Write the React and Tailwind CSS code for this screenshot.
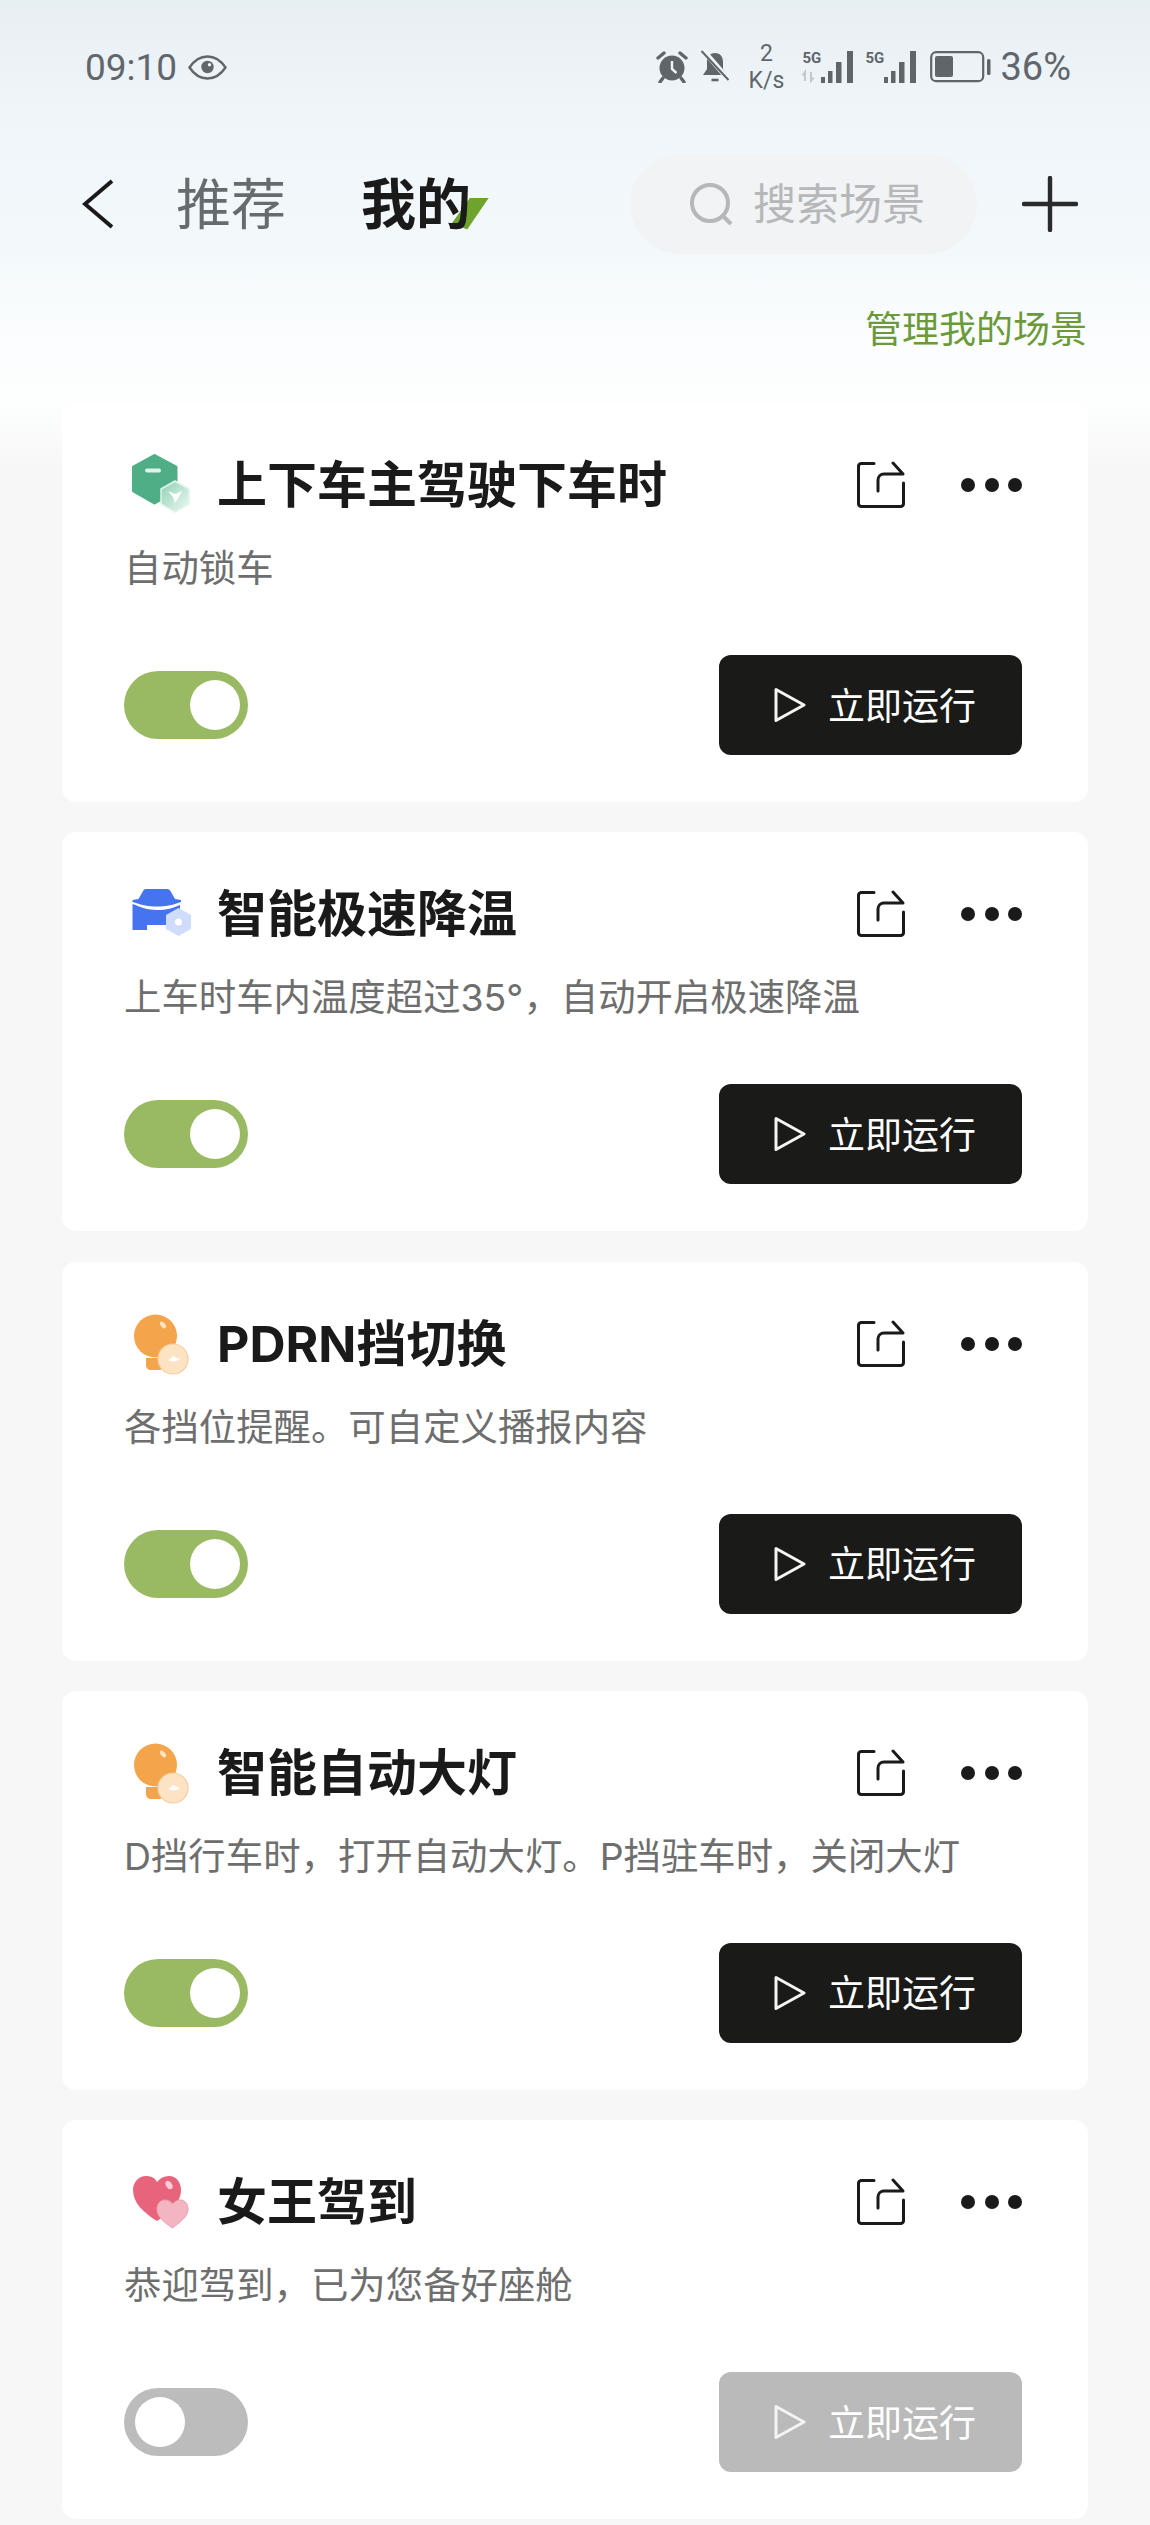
const cjk = "font-['Inter','Noto_Sans_CJK_SC',sans-serif]";

const scenes = [
  { title: "上下车主驾驶下车时", desc: "自动锁车", icon: "hex", on: true },
  { title: "智能极速降温", desc: "上车时车内温度超过35°，自动开启极速降温", icon: "car", on: true },
  { title: "PDRN挡切换", desc: "各挡位提醒。可自定义播报内容", icon: "bulb", on: true },
  { title: "智能自动大灯", desc: "D挡行车时，打开自动大灯。P挡驻车时，关闭大灯", icon: "bulb", on: true },
  { title: "女王驾到", desc: "恭迎驾到，已为您备好座舱", icon: "heart", on: false },
];

// --- Status bar icons ---
const Eye = () => (
  <svg width="39" height="25" viewBox="0 0 39 25" fill="none">
    <path d="M1.500 12.500C6.500 5 12.500 1.500 19.500 1.500s13 3.500 18 11c-5 7.500-11 11-18 11s-13-3.500-18-11Z" stroke="#60666b" strokeWidth="2.400" />
    <circle cx="19.500" cy="12" r="6.200" fill="#60666b" />
    <circle cx="21.500" cy="9.800" r="1.700" fill="#eef4f8" />
  </svg>
);

const Alarm = () => (
  <svg width="32" height="32" viewBox="0 0 32 32" fill="none">
    <circle cx="16" cy="17" r="12.500" fill="#5f6569" />
    <path d="M16 10v8l4.500 4" stroke="#f1f5f8" strokeWidth="2.400" />
    <path d="M2 7l6-5M30 7l-6-5M7 27l-3 4M25 27l3 4" stroke="#5f6569" strokeWidth="3.400" strokeLinecap="round" />
  </svg>
);

const BellOff = () => (
  <svg width="30" height="34" viewBox="0 0 30 34" fill="none">
    <path d="M15 3c-5.500 0-8 4-8 9v7l-4 6h24l-4-6v-7c0-5-2.500-9-8-9Z" fill="#5f6569" />
    <path d="M11.500 30h7" stroke="#5f6569" strokeWidth="2.600" />
    <path d="M3 0l26 30" stroke="#f1f5f8" strokeWidth="5" />
    <path d="M1.500 1l27 29" stroke="#5f6569" strokeWidth="2" />
  </svg>
);

const Signal = ({ arrows }) => (
  <div className="relative h-[32px] w-[52px]">
    <span className="absolute top-[-3px] left-0 font-['Roboto',sans-serif] text-[15px] leading-[20px] font-bold text-[#5f6569]">5G</span>
    <svg className="absolute inset-0" width="52" height="32" viewBox="0 0 52 32">
      {arrows && <path d="M3 30v-9l-2.500 3.500M9 21v9l2.500-3.500" stroke="#c4c8cb" strokeWidth="2" fill="none" />}
      <rect x="19" y="26" width="4" height="6" fill="#5f6569" />
      <rect x="26" y="20" width="4.500" height="12" fill="#5f6569" />
      <rect x="34" y="11" width="5.500" height="21" fill="#5f6569" />
      <rect x="45" y="0" width="6" height="32" fill="#5f6569" />
    </svg>
  </div>
);

const Battery = () => (
  <svg width="61" height="32" viewBox="0 0 61 32" fill="none">
    <rect x="1.200" y="1.200" width="52" height="29" rx="5" stroke="#5f6569" strokeWidth="2.200" />
    <rect x="5" y="5" width="18" height="21" rx="2" fill="#5f6569" />
    <rect x="57" y="8" width="3.500" height="16" rx="1.500" fill="#5f6569" />
  </svg>
);

// --- Scene icons ---
const SceneIcon = ({ kind }) => {
  if (kind === "hex")
    return (
      <svg width="62" height="62" viewBox="0 0 62 62">
        <defs>
          <linearGradient id="hexGlass" x1="0" y1="0" x2="1" y2="1">
            <stop offset="0" stopColor="#8fd0b3" />
            <stop offset="1" stopColor="#eef9f4" />
          </linearGradient>
        </defs>
        <path d="M24.500 1.500 46 13v24L24.500 49 3.500 37V13Z" fill="#4fae85" stroke="#4fae85" strokeWidth="3" strokeLinejoin="round" />
        <rect x="15" y="14.500" width="16" height="4" rx="2" fill="#dff3ea" />
        <path d="M45 27 59 35v15l-14 8-14-8V35Z" fill="url(#hexGlass)" stroke="#e2f4ec" strokeWidth="1.500" strokeLinejoin="round" />
        <path d="M38 37l7 3 7-3-3 6-4 6-2-6Z" fill="#ffffff" />
      </svg>
    );
  if (kind === "car")
    return (
      <svg width="62" height="62" viewBox="0 0 62 62">
        <path d="M16 6h21c2 0 3 1 4 3l4 7 6 1v2l-3 1c-6 2-12 3.500-21 3.500S12 22 6 20l-3.500-1v-2l6-1 4-7c1-2 1.500-3 3.500-3Z" fill="#4674ef" />
        <path d="M2.500 21c8 3 15 6 24.500 6s16-2 23-5v20H17v5H2.500Z" fill="#4674ef" />
        <path d="M48.500 25 61 32v14l-12.500 7L36 46V32Z" fill="#cfdcfb" />
        <circle cx="48.500" cy="39" r="3.500" fill="#ffffff" />
      </svg>
    );
  if (kind === "bulb")
    return (
      <svg width="62" height="64" viewBox="0 0 62 64">
        <circle cx="25.500" cy="24" r="21.500" fill="#f4a44b" />
        <path d="M16 46h15v12H21c-3 0-5-2-5-5Z" fill="#f4a44b" />
        <ellipse cx="33" cy="13" rx="2.200" ry="4" transform="rotate(-40 33 13)" fill="#fde3c3" />
        <circle cx="43" cy="47" r="15" fill="#fbe3c4" stroke="#f6cd9c" strokeWidth="1.200" />
        <path d="M38 48c3-1 4-4 6-4 1 2 4 2 6 3-3 3-9 3-12 1Z" fill="#ffffff" />
      </svg>
    );
  return (
    <svg width="62" height="60" viewBox="0 0 62 60">
      <path d="M27 49C14 41 3 31 3 18 3 10 9 4 16 4c5 0 9 2 11 6 3-4 7-6 12-6 7 0 12 6 12 14 0 13-12 23-24 31Z" fill="#e8647c" />
      <ellipse cx="39" cy="13" rx="3" ry="4.500" transform="rotate(-35 39 13)" fill="#f9cdd5" />
      <path d="M42.500 56C34 50 27 45 27 37c0-5 3-9 8-9 3 0 6 1.500 7.500 4 2-2.500 5-4 8-4 4.500 0 7.500 4 7.500 9 0 8-8 13-15.500 19Z" fill="#f3b5c1" stroke="#eaa0af" strokeWidth="1" />
    </svg>
  );
};

// --- Card parts ---
const ShareIcon = () => (
  <svg width="50" height="48" viewBox="-1 -1 50 48" fill="none" stroke="#1a1a1a" strokeWidth="3" strokeLinecap="round" strokeLinejoin="round">
    <path d="M17 1.500H4A3 3 0 0 0 1.500 4v38A3 3 0 0 0 4 44.500h40a3 3 0 0 0 2.500-2.500V21" />
    <path d="M21 29V18c0-3.500 2.500-6 6-6h19L36 1" />
  </svg>
);

const Toggle = ({ on }) => (
  <div className={on ? "flex h-[68px] w-[124px] items-center justify-end rounded-full bg-[#99ba62] pr-[8px]" : "flex h-[68px] w-[124px] items-center justify-start rounded-full bg-[#bcbcbc] pl-[11px]"}>
    <div className="h-[50px] w-[50px] rounded-full bg-white" />
  </div>
);

const RunButton = ({ on }) => (
  <button className={on ? "flex h-[100px] w-[303px] items-center rounded-[12px] bg-[#1a1a18] pl-[55px] text-white" : "flex h-[100px] w-[303px] items-center rounded-[12px] bg-[#bababa] pl-[55px] text-white"}>
    <svg width="32" height="38" viewBox="0 0 32 38" fill="none" stroke="#f4f4f4" strokeWidth="3" strokeLinejoin="round">
      <path d="M2 3.500 30 19 2 34.500Z" />
    </svg>
    <span className="mt-[2px] ml-[22px] text-[37px] leading-none font-normal">立即运行</span>
  </button>
);

const SceneCard = ({ title, desc, icon, on }) => (
  <div className="ml-[62px] flex h-[399px] w-[1026px] flex-col rounded-[14px] bg-white pt-[50px] pr-[66px] pb-[47px] pl-[62px]">
    <div className="flex h-[64px] items-center">
      <div className="ml-[6px] w-[62px]"><SceneIcon kind={icon} /></div>
      <h3 className="ml-[25px] text-[50px] leading-none font-bold text-[#1a1a1a]">{title}</h3>
      <div className="ml-auto"><ShareIcon /></div>
      <div className="ml-[55px] flex gap-[9.500px]">
        <span className="h-[14px] w-[14px] rounded-full bg-[#1a1a1a]" />
        <span className="h-[14px] w-[14px] rounded-full bg-[#1a1a1a]" />
        <span className="h-[14px] w-[14px] rounded-full bg-[#1a1a1a]" />
      </div>
    </div>
    <p className="mt-[27px] text-[37.400px] leading-[50px] text-[#6e6e6e]">{desc}</p>
    <div className="mt-auto flex items-center justify-between">
      <Toggle on={on} />
      <RunButton on={on} />
    </div>
  </div>
);

const App = () => (
  <div className={`h-[2525px] w-[1150px] overflow-hidden bg-[#f7f7f7] bg-[linear-gradient(180deg,#e8eff4_0px,#eff5f9_110px,#f3f9fb_250px,#fbfdfe_340px,#fdfefe_400px,#f7f7f7_470px)] ${cjk}`}>
    <div className="h-[403px]">
      {/* Status bar */}
      <div className="flex h-[134px] items-center pr-[79px] pl-[85px] text-[#60666b]">
        <span className="font-['Roboto',sans-serif] text-[37px] leading-none">09:10</span>
        <div className="ml-[11px]"><Eye /></div>
        <div className="ml-auto flex items-center">
          <Alarm />
          <div className="ml-[12px]"><BellOff /></div>
          <div className="ml-[14px] flex w-[44px] flex-col items-center font-['Roboto',sans-serif] text-[23px] leading-[27px]">
            <span>2</span>
            <span>K/s</span>
          </div>
          <div className="ml-[14px]"><Signal arrows /></div>
          <div className="ml-[11px]"><Signal /></div>
          <div className="ml-[13px]"><Battery /></div>
          <span className="ml-[9px] font-['Roboto',sans-serif] text-[38px] leading-none">36%</span>
        </div>
      </div>

      {/* Tabs and search */}
      <div className="flex h-[140px] items-center pr-[72px] pl-[82px]">
        <svg width="32" height="50" viewBox="0 0 32 50" fill="none" stroke="#1a1a1a" strokeWidth="4">
          <path d="M30 2 3 25l27 23" />
        </svg>
        <span className="ml-[62px] text-[55px] leading-none text-[#666b6e]">推荐</span>
        <div className="relative ml-[75px]">
          <div className="absolute top-[21px] left-[91px] h-[32px] w-[37px] bg-[#6ea32e] [clip-path:polygon(49%_0,100%_0,41%_100%,0_80%)]" />
          <span className="relative text-[55px] leading-none font-bold text-[#1a1a1a]">我的</span>
        </div>
        <div className="ml-auto flex h-[100px] w-[347px] items-center rounded-full bg-[#f1f3f4] pl-[59px]">
          <svg width="44" height="44" viewBox="0 0 44 44" fill="none" stroke="#b5b7b8" strokeWidth="4">
            <circle cx="21" cy="21" r="18" />
            <path d="M33 33l9 9" />
          </svg>
          <span className="ml-[20px] text-[43px] leading-none text-[#b5b7b8]">搜索场景</span>
        </div>
        <svg className="ml-[45px]" width="56" height="56" viewBox="0 0 56 56" fill="none" stroke="#2b2b2b" strokeWidth="4.400" strokeLinecap="round">
          <path d="M28 2v52M2 28h52" />
        </svg>
      </div>

      {/* Manage link */}
      <div className="flex justify-end pt-[34px] pr-[63px] text-[37px] leading-[44px] text-[#6c9a3a]">管理我的场景</div>
    </div>

    {/* Scene list */}
    <div className="flex flex-col gap-[30.250px]">
      {scenes.map((s) => (
        <SceneCard key={s.title} {...s} />
      ))}
    </div>
  </div>
);

export default App;
